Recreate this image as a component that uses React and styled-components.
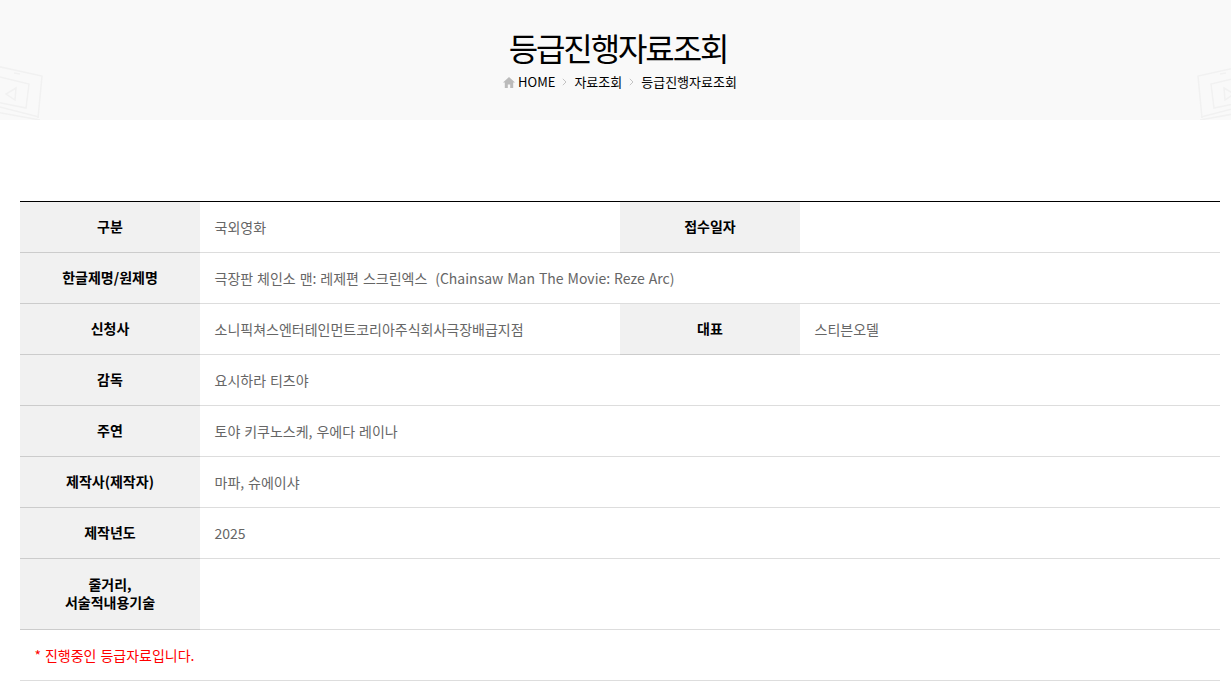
import React from "react";
import styled, { createGlobalStyle } from "styled-components";

const Global = createGlobalStyle`
  html, body { margin: 0; padding: 0; background: #fff; overflow: hidden; height: 688px; }
  body { font-family: "Noto Sans CJK KR", "Noto Sans", sans-serif; font-size: 14px; color: #666; }
  * { box-sizing: border-box; }
`;
const Page = styled.div`width: 1240px; height: 688px; overflow: hidden;`;
const Hero = styled.header`
  position: relative; width: 1231px; height: 120px; background: #f9f9f9; overflow: hidden;
  text-align: center; padding-top: 26px;
`;
const HeroInner = styled.div`width: 1240px;`;
const Title = styled.h1`
  margin: 0 4px 0 0; font-size: 32px; line-height: 42px; font-weight: 400; color: #000; letter-spacing: -2.1px;
`;
const Crumbs = styled.nav`
  display: flex; justify-content: center; align-items: center; height: 20px; margin-top: 3px;
  font-size: 13px; color: #000; letter-spacing: 0;
`;
const Home = styled.svg`width: 12px; height: 11px; margin: 2px 3px 0 0; fill: #bbb;`;
const Chevron = styled.svg`
  width: 5px; height: 8px; margin: 2px 7px 0 7px; fill: none; stroke: #c4c4c4; stroke-width: 1;
`;
const Laptop = styled.svg`
  position: absolute; top: 60px; width: 50px; height: 60px; fill: none; stroke: #f1f1f1; stroke-width: 1.5;
  ${p => (p.$side === "left" ? "left: 0;" : "right: -9px; transform: scaleX(-1);")}
`;
const Table = styled.table`
  width: 1200px; margin: 81px 0 0 20px; border-collapse: collapse; table-layout: fixed;
  border-top: 1px solid #000;
`;
const Row = styled.tr`
  height: ${p => p.$h || 51}px; border-bottom: 1px solid #ddd;
`;
const Th = styled.th`
  width: 180px; background: #f1f1f1; color: #000; font-size: 14px; font-weight: 700; line-height: 18px;
  text-align: center; padding: 0 10px 2px; border-bottom: 1px solid #ccc;
`;
const Td = styled.td`
  padding: 0 15px 0 14.500px; color: #666; font-size: 14px; line-height: 20px; vertical-align: middle;
  word-spacing: 0.8px;
`;
const Notice = styled(Td)`color: #f00;`;

const Sep = () => (
  <Chevron viewBox="0 0 5 8"><path d="M.8.8 4 4 .8 7.2" /></Chevron>
);
const LaptopArt = ({ side }) => (
  <Laptop $side={side} viewBox="0 0 50 60">
    <path d="M-4 6 42 16 38 58" />
    <path d="M-4 16 29 24 26 48-4 42" />
    <path d="M16 28 6 34 15 40Z" />
    <path d="M-4 46 39 57M-4 52 40 60" />
    <path d="M14 13l6 1" />
  </Laptop>
);

export default function App() {
  return (
    <Page>
      <Global />
      <Hero>
        <LaptopArt side="left" />
        <LaptopArt side="right" />
        <HeroInner>
          <Title>등급진행자료조회</Title>
          <Crumbs>
            <Home viewBox="0 0 12 11"><path d="M6 0 0 5.500h1.800V11h3V7.500h2.400V11h3V5.500H12z" /></Home>
            HOME<Sep />자료조회<Sep />등급진행자료조회
          </Crumbs>
        </HeroInner>
      </Hero>
      <Table>
        <colgroup>
          <col width="180" /><col width="420" /><col width="180" /><col width="420" />
        </colgroup>
        <tbody>
          <Row><Th>구분</Th><Td>국외영화</Td><Th>접수일자</Th><Td /></Row>
          <Row><Th>한글제명/원제명</Th><Td colSpan={3}>극장판 체인소 맨: 레제편 스크린엑스 &nbsp;(Chainsaw Man The Movie: Reze Arc)</Td></Row>
          <Row><Th>신청사</Th><Td>소니픽쳐스엔터테인먼트코리아주식회사극장배급지점</Td><Th>대표</Th><Td>스티븐오델</Td></Row>
          <Row><Th>감독</Th><Td colSpan={3}>요시하라 티츠야</Td></Row>
          <Row><Th>주연</Th><Td colSpan={3}>토야 키쿠노스케, 우에다 레이나</Td></Row>
          <Row><Th>제작사(제작자)</Th><Td colSpan={3}>마파, 슈에이샤</Td></Row>
          <Row><Th>제작년도</Th><Td colSpan={3}>2025</Td></Row>
          <Row $h={71}><Th>줄거리,<br />서술적내용기술</Th><Td colSpan={3} /></Row>
          <Row><Notice colSpan={4}>* 진행중인 등급자료입니다.</Notice></Row>
        </tbody>
      </Table>
    </Page>
  );
}
